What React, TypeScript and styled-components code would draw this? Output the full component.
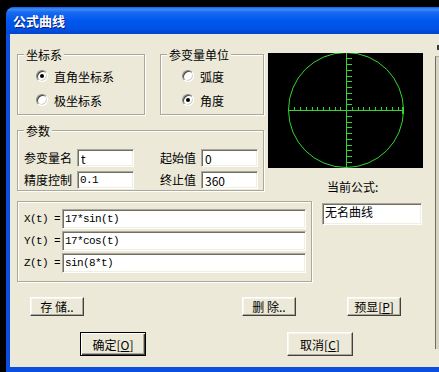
import React from "react";
import styled, { createGlobalStyle } from "styled-components";

const GlobalStyle = createGlobalStyle`
  html, body {
    margin: 0;
    padding: 0;
    width: 439px;
    height: 372px;
    overflow: hidden;
    background: #000;
  }
`;

const cjk = `"Noto Sans CJK SC", "Liberation Sans", sans-serif`;
const mono = `"Liberation Mono", "Noto Sans CJK SC", monospace`;

const Screen = styled.div`
    padding: 7px 0 0 6px;
  `,
  Window = styled.div`
    width: 460px;
    height: 372px;
    background: #0a4fe0;
    border-radius: 8px 8px 0 0;
    overflow: hidden;
  `,
  TitleBar = styled.div`
    height: 27px;
    display: flex;
    align-items: center;
    padding-left: 7px;
    background: linear-gradient(
      to bottom,
      #0a5fe8 0%,
      #3d8cf8 8%,
      #1a6af0 20%,
      #0058ee 50%,
      #0052e6 80%,
      #0246c8 100%
    );
    color: #fff;
    font: bold 13px ${cjk};
    text-shadow: 1px 1px #0a1f80;
  `,
  Body = styled.div`
    margin-left: 4px;
    height: 333px;
    display: flex;
    background: #ece9d8;
    font: 12px ${cjk};
    color: #000;
  `,
  Main = styled.div`
    width: 413px;
    padding-left: 7px;
    padding-top: 12px;
    display: flex;
    flex-direction: column;
  `,
  Side = styled.div`
    margin-left: 5px;
    display: flex;
    flex-direction: column;
  `,
  SideMark = styled.div`
    width: 2px;
    height: 5px;
    margin: 11px 0 0 2px;
    background: #3a3a3a;
  `,
  SideBox = styled.div`
    margin-top: 6px;
    width: 30px;
    height: 292px;
    background: #d8d4c4;
    border-left: 1px solid #716f64;
    border-top: 1px solid #aca899;
  `,
  Top = styled.div`
    display: flex;
    align-items: flex-start;
    gap: 4px;
  `,
  LeftCol = styled.div`
    width: 247px;
    display: flex;
    flex-direction: column;
    gap: 7px;
  `,
  GroupRow = styled.div`
    display: flex;
    gap: 15px;
  `,
  Group = styled.fieldset<{ $w: number }>`
    margin: 0;
    padding: 0;
    min-width: 0;
    width: ${({ $w }) => $w}px;
    box-sizing: border-box;
    border: 1px solid #aca899;
    box-shadow: inset 1px 1px #fff, 1px 1px #fff;
  `,
  Legend = styled.legend`
    margin-left: 6px;
    padding: 0 2px;
    line-height: 14px;
    font: 12px ${cjk};
    background: #ece9d8;
  `,
  RadioList = styled.div<{ $pl: number }>`
    padding: 1px 0 2px ${({ $pl }) => $pl}px;
  `,
  RadioRow = styled.label`
    height: 24px;
    display: flex;
    align-items: center;
    gap: 6px;
  `,
  RadioDot = styled.span<{ $on?: boolean }>`
    width: 12px;
    height: 12px;
    box-sizing: border-box;
    border-radius: 50%;
    background: #fff;
    border: 1px solid;
    border-color: #8c8a7e #fff #fff #8c8a7e;
    box-shadow: inset 1px 1px #404040, inset -1px -1px #d4d0c8;
    display: flex;
    align-items: center;
    justify-content: center;
    &::after {
      content: "";
      width: 4px;
      height: 4px;
      border-radius: 50%;
      background: ${({ $on }) => ($on ? "#000" : "transparent")};
    }
  `,
  ParamGrid = styled.div`
    padding: 10px 0 1px 6px;
    display: grid;
    grid-template-columns: 53px 83px 41px 57px;
    row-gap: 4px;
    align-items: center;
  `,
  Label = styled.span`
    white-space: nowrap;
    line-height: 14px;
  `,
  Field = styled.div<{ $w: number; $h: number; $mono?: boolean }>`
    width: ${({ $w }) => $w}px;
    height: ${({ $h }) => $h}px;
    box-sizing: border-box;
    background: #fff;
    border: 1px solid;
    border-color: #aca899 #fff #fff #aca899;
    box-shadow: inset 1px 1px #716f64, inset -1px -1px #f1efe2;
    padding: 0 ${({ $mono }) => ($mono ? 2 : 3)}px;
    display: flex;
    align-items: center;
    white-space: nowrap;
    overflow: hidden;
    font: ${({ $mono }) => ($mono ? `11px ${mono}` : `12px ${cjk}`)};
    letter-spacing: ${({ $mono }) => ($mono ? "-0.6px" : "normal")};
  `,
  RightCol = styled.div`
    margin-top: 7px;
    display: flex;
    flex-direction: column;
  `,
  Scope = styled.div`
    width: 155px;
    height: 115px;
    background: #000;
  `,
  CurrentLabel = styled.div`
    margin: 12px 0 0 59px;
    line-height: 14px;
  `,
  FormulaRow = styled.div`
    margin-top: 7px;
    display: flex;
    align-items: flex-start;
    gap: 10px;
  `,
  FormulaList = styled.div`
    padding: 7px 0 8px 6px;
    display: flex;
    flex-direction: column;
    gap: 2px;
  `,
  FormulaLine = styled.div`
    display: flex;
    align-items: center;
    gap: 2px;
  `,
  MonoLabel = styled.span`
    width: 36px;
    font: 11px ${mono};
    letter-spacing: -0.6px;
    white-space: pre;
  `,
  NameBox = styled.div`
    margin-top: 2px;
    width: 100px;
    height: 22px;
    box-sizing: border-box;
    background: #fff;
    border: 1px solid;
    border-color: #aca899 #fff #fff #aca899;
    box-shadow: inset 1px 1px #716f64, inset -1px -1px #f1efe2;
    padding: 1px 2px;
    line-height: 14px;
  `,
  ButtonRow = styled.div<{ $mt: number }>`
    margin-top: ${({ $mt }) => $mt}px;
    display: flex;
  `,
  Button = styled.button<{ $w: number; $h: number; $ml: number; $def?: boolean }>`
    margin-left: ${({ $ml }) => $ml}px;
    width: ${({ $w }) => $w}px;
    height: ${({ $h }) => $h}px;
    padding: 0;
    background: #ece9d8;
    font: 12px ${cjk};
    color: #000;
    border: 1px solid;
    border-color: ${({ $def }) =>
      $def ? "#000" : "#fff #404040 #404040 #fff"};
    box-shadow: ${({ $def }) =>
      $def
        ? "inset 1px 1px #fff, inset -1px -1px #404040, inset -2px -2px #aca899"
        : "inset -1px -1px #aca899, inset 1px 1px #f7f6f0"};
    white-space: pre;
    display: flex;
    align-items: center;
    justify-content: center;
    u {
      text-decoration: underline;
      text-underline-offset: 1px;
    }
  `;

const ScopeDrawing = () => {
  const cx = 78,
    cy = 57,
    r = 57.5,
    step = 5.75;
  const ticks: React.ReactNode[] = [];
  for (let k = 1; k <= 9; k++) {
    ticks.push(
      <line key={"hl" + k} x1={cx - k * step} y1={cy - 4} x2={cx - k * step} y2={cy} />,
      <line key={"hr" + k} x1={cx + k * step} y1={cy - 4} x2={cx + k * step} y2={cy} />,
      <line key={"vu" + k} x1={cx} y1={cy - k * step} x2={cx + 5} y2={cy - k * step} />,
      <line key={"vd" + k} x1={cx} y1={cy + k * step} x2={cx + 5} y2={cy + k * step} />
    );
  }
  return (
    <svg width="155" height="115" viewBox="0 0 155 115" shapeRendering="crispEdges">
      <g stroke="#33d433" strokeWidth="1" fill="none">
        <circle cx={cx} cy={cy} r={r} shapeRendering="auto" />
        <line x1={cx - r} y1={cy + 0.5} x2={cx + r} y2={cy + 0.5} />
        <line x1={cx + 0.5} y1={0} x2={cx + 0.5} y2={115} />
        <line x1={cx + r - 1} y1={cy - 3} x2={cx + r - 1} y2={cy + 4} strokeWidth="2" />
        <g transform="translate(0.5 0.5)">{ticks}</g>
      </g>
    </svg>
  );
};

const formulas = [
  ["X(t) =", "17*sin(t)"],
  ["Y(t) =", "17*cos(t)"],
  ["Z(t) =", "sin(8*t)"],
];

const App = () => {
  return (
    <>
      <GlobalStyle />
      <Screen>
        <Window>
          <TitleBar>公式曲线</TitleBar>
          <Body>
            <Main>
              <Top>
                <LeftCol>
                  <GroupRow>
                    <Group $w={128}>
                      <Legend>坐标系</Legend>
                      <RadioList $pl={18}>
                        <RadioRow>
                          <RadioDot $on />
                          直角坐标系
                        </RadioRow>
                        <RadioRow>
                          <RadioDot />
                          极坐标系
                        </RadioRow>
                      </RadioList>
                    </Group>
                    <Group $w={104}>
                      <Legend>参变量单位</Legend>
                      <RadioList $pl={21}>
                        <RadioRow>
                          <RadioDot />
                          弧度
                        </RadioRow>
                        <RadioRow>
                          <RadioDot $on />
                          角度
                        </RadioRow>
                      </RadioList>
                    </Group>
                  </GroupRow>
                  <Group $w={247}>
                    <Legend>参数</Legend>
                    <ParamGrid>
                      <Label>参变量名</Label>
                      <Field $w={57} $h={18}>t</Field>
                      <Label>起始值</Label>
                      <Field $w={57} $h={18}>0</Field>
                      <Label>精度控制</Label>
                      <Field $w={57} $h={18} $mono>
                        0.1
                      </Field>
                      <Label>终止值</Label>
                      <Field $w={57} $h={18}>360</Field>
                    </ParamGrid>
                  </Group>
                </LeftCol>
                <RightCol>
                  <Scope>
                    <ScopeDrawing />
                  </Scope>
                  <CurrentLabel>当前公式:</CurrentLabel>
                </RightCol>
              </Top>

              <FormulaRow>
                <Group $w={295}>
                  <FormulaList>
                    {formulas.map(([k, v]) => (
                      <FormulaLine key={k}>
                        <MonoLabel>{k}</MonoLabel>
                        <Field $w={244} $h={20} $mono>
                          {v}
                        </Field>
                      </FormulaLine>
                    ))}
                  </FormulaList>
                </Group>
                <NameBox>无名曲线</NameBox>
              </FormulaRow>

              <ButtonRow $mt={15}>
                <Button $w={54} $h={19} $ml={13}>
                  {"存 储.."}
                </Button>
                <Button $w={54} $h={19} $ml={158}>
                  {"删 除.."}
                </Button>
                <Button $w={54} $h={19} $ml={51}>
                  <span>
                    预显[<u>P</u>]
                  </span>
                </Button>
              </ButtonRow>
              <ButtonRow $mt={16}>
                <Button $w={66} $h={24} $ml={63} $def>
                  <span>
                    确定[<u>O</u>]
                  </span>
                </Button>
                <Button $w={66} $h={24} $ml={141}>
                  <span>
                    取消[<u>C</u>]
                  </span>
                </Button>
              </ButtonRow>
            </Main>
            <Side>
              <SideMark />
              <SideBox />
            </Side>
          </Body>
        </Window>
      </Screen>
    </>
  );
};

export default App;
